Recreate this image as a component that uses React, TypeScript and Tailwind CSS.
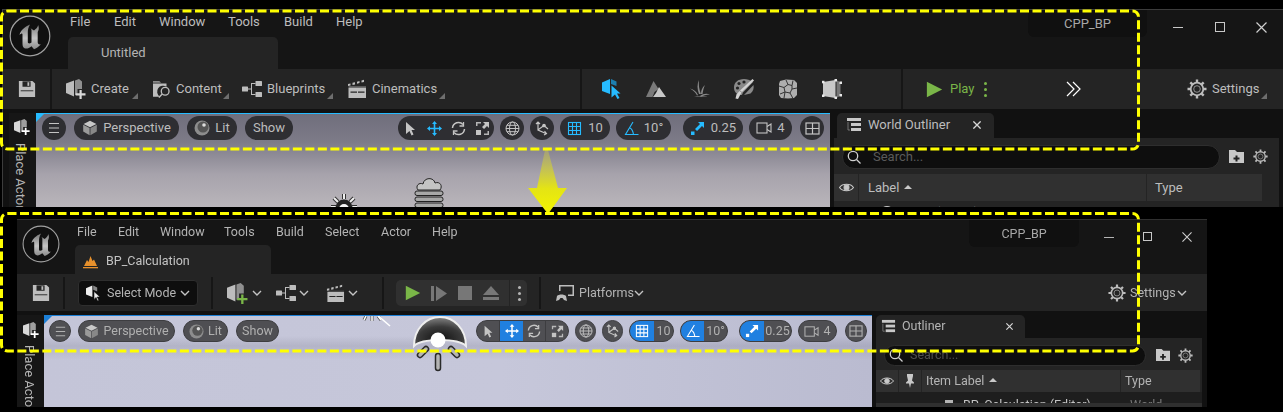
import React from "react";

type IP = { s?: number; c?: string; className?: string };
const Svg = ({ s = 20, c = "#bdbdbd", className = "", children }: IP & { children: React.ReactNode }) => (
  <svg width={s} height={s} viewBox="0 0 20 20" fill={c} stroke="none" className={`shrink-0 ${className}`}>
    {children}
  </svg>
);

const Logo = ({ s = 42, id }: { s?: number; id: string }) => (
  <svg width={s} height={s} viewBox="0 0 42 42" className="shrink-0">
    <defs>
      <linearGradient id={id} x1="0" y1="10" x2="0" y2="34" gradientUnits="userSpaceOnUse">
        <stop offset="0" stopColor="#7c7c7c" />
        <stop offset=".55" stopColor="#c4c4c4" />
        <stop offset="1" stopColor="#8c8c8c" />
      </linearGradient>
    </defs>
    <circle cx="21" cy="21" r="19.800" fill="#101010" stroke="#a0a0a0" strokeWidth="1.200" />
    <path
      d="M10.500 20C11.500 15.500 15.500 12 21 9.500C19.200 12.500 18.800 15 18.800 18V27C18.800 28.800 20.800 28.800 22.500 27.500V15.500C22.500 14.500 22 13.500 21.200 13L25 15.500C27 14 28.500 12.500 29.200 10C30.300 13 29.800 15 28.700 17V27C28.700 29 29.800 30 32 29.300C29.500 32 27.200 33.500 25 34.200L22.500 31.300C20 33.200 17.500 34.200 15.500 33.200C14 32.300 13.500 31 13.500 28.500V19.500C13.500 18 12.200 18.500 10.500 20Z"
      fill={`url(#${id})`}
    />
  </svg>
);

const Save = ({ s = 20, c = "#bdbdbd" }: IP) => (
  <Svg s={s} c={c}>
    <path d="M1 1h15l3 3v15H1z" />
    <rect x="5" y="1.500" width="9" height="6" fill="#242424" />
    <rect x="10.500" y="2.500" width="2" height="4" fill={c} />
    <rect x="3" y="11.500" width="14" height="1" fill="#242424" />
  </Svg>
);
const Cube = ({ s = 22, c = "#bdbdbd", plus = "#d9d9d9" }: IP & { plus?: string }) => (
  <Svg s={s} c={c}>
    <path d="M0 4.500 8 1.500 8 17.500 0 14z" />
    <path d="M9 1.500 13 0l3 2.500V10H11.500v6H9z" opacity=".7" />
    <path d="M13.500 11h2.200v3.200H19.500v2.200h-3.800V20h-2.200v-3.600H9.700v-2.200h3.800z" fill={plus} />
  </Svg>
);
const Folder = ({ s = 20, c = "#bdbdbd" }: IP) => (
  <Svg s={s}>
    <path d="M0 1h7l2 2H0z" fill="#8a8a8a" />
    <path d="M0 4h15v3.500a6.500 6.500 0 0 0-7.500 11H0z" fill={c} />
    <circle cx="13.500" cy="12.500" r="4.300" fill="none" stroke={c} strokeWidth="1.500" />
    <path d="M10.300 15.500 6.500 19.500" stroke={c} strokeWidth="1.600" />
  </Svg>
);
const Blueprint = ({ s = 20, c = "#bdbdbd" }: IP) => (
  <Svg s={s} c={c}>
    <rect x="0" y="7.500" width="6" height="5" rx=".6" />
    <rect x="13.500" y="2" width="6.500" height="5" rx=".6" />
    <rect x="13.500" y="13" width="6.500" height="5" rx=".6" />
    <path d="M6 9.500h3V4h4.500v1H10v10h3.500v1H9v-5.500H6z" />
  </Svg>
);
const Clapper = ({ s = 20, c = "#bdbdbd" }: IP) => (
  <Svg s={s} c={c}>
    <path d="M1.500 8.500h17.500v10.500H1.500zM3.500 12.500v1.200h6.500v-1.200zM11 12.500v1.200h6.500v-1.200z" fillRule="evenodd" />
    <path d="M1 7 1 5 3.500 4.500 3.500 6.500zM5.500 6 5.500 3.800 8 3.200 8 5.400zM10 4.800 10 2.700 12.500 2 12.500 4.100zM14.500 3.600 14.500 1.500 17 .8 17 3z" />
    <rect x="1.500" y="7.200" width="17.500" height=".6" opacity=".6" />
  </Svg>
);
const Gear = ({ s = 20, c = "#bdbdbd" }: IP) => (
  <Svg s={s} c={c}>
    <g stroke={c} strokeWidth="2.400">
      <path d="M10 0.500v3M10 16.500v3M0.500 10h3M16.500 10h3M3.300 3.300l2.100 2.100M14.600 14.600l2.100 2.100M3.300 16.700l2.100-2.100M14.600 5.400l2.100-2.100" />
    </g>
    <circle cx="10" cy="10" r="6.300" fill="none" stroke={c} strokeWidth="1.800" />
    <circle cx="10" cy="10" r="3.300" fill="none" stroke={c} strokeWidth="1" opacity=".7" />
  </Svg>
);
const Chev = ({ s = 10, c = "#c4c4c4" }: IP) => (
  <svg width={s} height={s} viewBox="0 0 10 10" className="shrink-0" fill="none" stroke={c} strokeWidth="1.400">
    <path d="M1 3l4 4 4-4" />
  </svg>
);
const Corner = () => <span className="self-end mb-[10px] ml-[3px] w-0 h-0 border-l-[6px] border-l-transparent border-b-[6px] border-b-[#6e6e6e]" />;

const Play = ({ s = 18, c = "#7ab648" }: IP) => (
  <Svg s={s} c={c}>
    <path d="M1 1l18 9-18 9z" />
  </Svg>
);
const Mountains = ({ s = 20 }: IP) => (
  <Svg s={s}>
    <path d="M0 18 7.500 2l5 8-4 3-2 5z" fill="#7a7a7a" />
    <path d="M7 18l3-4 3-6 7 10z" fill="#c8c8c8" />
  </Svg>
);
const Grass = ({ s = 20 }: IP) => (
  <Svg s={s}>
    <path d="M9 15C7 10 7 5 9 1c-.5 5 0 9 2 14zM11 15c0-4 1-6 4-9-1.500 3-2 6-2.500 9zM8 16C6 12 3 10 0 9.500 4 12 6 14 7 16.500zM10 17c3-2 6-3 10-1.500-4 0-7 1-9 2.500zM4 18c4-1.500 9-1.500 14 0-5-.5-9-.5-14 0z" fill="#8a8a8a" />
  </Svg>
);
const Palette = ({ s = 20 }: IP) => (
  <Svg s={s}>
    <path d="M10 0C4 0 0 3.500 0 8.500s4 8 7.500 7.500c1-.2 1-1.500 1.500-2.500L19 3C16 1 13 0 10 0z" fill="#8a8a8a" />
    <circle cx="3.500" cy="9" r="1.600" fill="#242424" />
    <circle cx="5" cy="4.500" r="1.600" fill="#242424" />
    <circle cx="10" cy="3" r="1.600" fill="#242424" />
    <path d="M20 1.500 8 13l-2-1.500L18.500 0z" fill="#d4d4d4" />
    <path d="M7.500 13.500 4 20l-2.500-.5 1-4 3-3.500z" fill="#d4d4d4" />
    <path d="M19.500 6c.5 3 0 6-3 8.500L10 16z" fill="#8a8a8a" />
  </Svg>
);
const Rocks = ({ s = 20 }: IP) => (
  <Svg s={s}>
    <path d="M2 2 8 .5 16 1l3 3v12l-3 3-6 .5L3 19l-2-3V5z" fill="#aeaeae" />
    <path d="M1 7l5 1.500 4-3 4 1 1-5M6 8.500 7 13 2 15M7 13l5 1 3 5.500M12 14l2-4 5-1M10 5.500 8 1M14 6.500l0 3.500M7 13l-1 6" fill="none" stroke="#343434" strokeWidth="1" />
  </Svg>
);
const Geometry = ({ s = 20 }: IP) => (
  <Svg s={s}>
    <path d="M1 3 13.500 1v18L1 17z" fill="#c8c8c8" />
    <path d="M14.500 1l4 2.500v13l-4 2.500z" fill="#777" />
    <g fill="#e8e8e8">
      <rect x="0" y="1.800" width="2.500" height="2.500" />
      <rect x="12.500" y="0" width="2.500" height="2.500" />
      <rect x="17.500" y="2.500" width="2.500" height="2.500" />
      <rect x="0" y="15.500" width="2.500" height="2.500" />
      <rect x="12.500" y="17.500" width="2.500" height="2.500" />
      <rect x="17.500" y="15" width="2.500" height="2.500" />
    </g>
  </Svg>
);
const SelectBlue = ({ s = 20 }: IP) => (
  <Svg s={s}>
    <path d="M0 3.500 8 0v15L0 12z" fill="#26bbff" />
    <path d="M9 0l5.500 2.500V7L9 5z" fill="#1d7fb0" />
    <path d="M9.500 6.500l9 8h-3.500l2.500 4.500-2 1-2.500-4.500-3.500 3z" fill="#26bbff" />
  </Svg>
);
const SelectWhite = ({ s = 16 }: IP) => (
  <Svg s={s}>
    <path d="M0 4l8-3.500v14.500L0 12z" fill="#eee" />
    <path d="M9 .5l5 2.500V8l-5-2z" fill="#888" />
    <path d="M10 8l7.500 7H14l2 4-1.500 1-2-4.500-2.500 2.500z" fill="#eee" stroke="#111" strokeWidth=".7" />
  </Svg>
);
const DoubleChev = () => (
  <svg width="16" height="16" viewBox="0 0 16 16" fill="none" stroke="#fff" strokeWidth="1.200">
    <path d="M1 1l7 7-7 7M7 1l7 7-7 7" />
  </svg>
);
const Hamburger = ({ s = 14, c = "#c4c4c4" }: IP) => (
  <svg width={s} height={s} viewBox="0 0 14 14" fill="none" stroke={c} strokeWidth="1.100">
    <path d="M2 2.500h10M2 7h10M2 11.500h10" />
  </svg>
);
const Persp = ({ s = 18 }: IP) => (
  <Svg s={s}>
    <path d="M10 1l8 4-8 4-8-4z" fill="#c8c8c8" />
    <path d="M1.500 6l8 4v9l-8-4.500z" fill="#9a9a9a" />
    <path d="M18.500 6l-8 4v9l8-4.500z" fill="#888" />
  </Svg>
);
const Ball = ({ s = 16 }: IP) => (
  <svg width={s} height={s} viewBox="0 0 16 16">
    <circle cx="8" cy="8" r="7.500" fill="#8d8d8d" />
    <circle cx="9" cy="7" r="5.500" fill="#555" />
    <circle cx="10" cy="5" r="1.800" fill="#ddd" />
  </svg>
);
const Cursor = ({ s = 15, c = "#c4c4c4" }: IP) => (
  <svg width={s} height={s} viewBox="0 0 15 15" fill={c}>
    <path d="M3 1l9 8H8.500l2 4.500-2 1-2-4.500L3 13z" />
  </svg>
);
const Move = ({ s = 15, c = "#26bbff" }: IP) => (
  <svg width={s} height={s} viewBox="0 0 15 15" fill={c}>
    <path d="M7.500 0 10 3H8.300v3.700H12V5l3 2.500L12 10V8.300H8.300V12H10l-2.500 3L5 12h1.700V8.300H3V10L0 7.500 3 5v1.700h3.700V3H5z" />
  </svg>
);
const Rotate = ({ s = 15, c = "#c4c4c4" }: IP) => (
  <svg width={s} height={s} viewBox="0 0 15 15" fill="none" stroke={c} strokeWidth="1.500">
    <path d="M1.500 7A6 6 0 0 1 12 3.500M13.500 8A6 6 0 0 1 3 11.500" />
    <path d="M12.500 1v4h-4M2.500 14v-4h4" strokeWidth="1.300" />
  </svg>
);
const Scale = ({ s = 15, c = "#c4c4c4" }: IP) => (
  <svg width={s} height={s} viewBox="0 0 15 15" fill={c}>
    <path d="M1 1h5v1.500H2.500V5H1zM14 14H9v-1.500h3.500V10H14z" opacity=".9" />
    <path d="M8 1h6v6l-2-2-3 3-2-2 3-3z" />
    <rect x="1" y="9" width="5" height="5" />
  </svg>
);
const Globe = ({ s = 15, c = "#c4c4c4" }: IP) => (
  <svg width={s} height={s} viewBox="0 0 15 15" fill="none" stroke={c} strokeWidth="1">
    <circle cx="7.500" cy="7.500" r="6.500" />
    <ellipse cx="7.500" cy="7.500" rx="3" ry="6.500" />
    <path d="M1 7.500h13M2 4.300h11M2 10.700h11" />
  </svg>
);
const Surface = ({ s = 15, c = "#c4c4c4" }: IP) => (
  <svg width={s} height={s} viewBox="0 0 15 15" fill="none" stroke={c} strokeWidth="1.200">
    <path d="M3 1v8l8 3.500M1 3l2-2 2 2M9 14l2.500-1.500L9.500 10M3.500 8.500 9 4.500l4 3.500" />
    <circle cx="9" cy="4.500" r="1.200" fill={c} />
  </svg>
);
const GridI = ({ s = 15, c = "#26bbff" }: IP) => (
  <svg width={s} height={s} viewBox="0 0 15 15" fill="none" stroke={c} strokeWidth="1.100">
    <rect x="1.500" y="1.500" width="12" height="12" />
    <path d="M5.500 1.500v12M9.500 1.500v12M1.500 5.500h12M1.500 9.500h12" />
  </svg>
);
const Angle = ({ s = 15, c = "#26bbff" }: IP) => (
  <svg width={s} height={s} viewBox="0 0 15 15" fill="none" stroke={c} strokeWidth="1.100">
    <path d="M9 1 1.500 13.500H14.500M6 7c2 1 3 3 3.500 6.500" />
  </svg>
);
const ScaleSnap = ({ s = 15, c = "#26bbff" }: IP) => (
  <svg width={s} height={s} viewBox="0 0 15 15" fill={c}>
    <path d="M8 1h6v6l-2-2-5 5-2-2 5-5z" />
    <rect x="1" y="10.500" width="3.500" height="3.500" />
  </svg>
);
const Camera = ({ s = 16, c = "#c4c4c4" }: IP) => (
  <svg width={s} height={s} viewBox="0 0 16 16" fill="none" stroke={c} strokeWidth="1.100">
    <rect x="1" y="3" width="10" height="10" />
    <path d="M11 6.500 15 4v8l-4-2.500" />
  </svg>
);
const Layout = ({ s = 15, c = "#c4c4c4" }: IP) => (
  <svg width={s} height={s} viewBox="0 0 15 15" fill="none" stroke={c} strokeWidth="1.200">
    <rect x="1" y="2" width="13" height="11" />
    <path d="M7.500 2v11M1 7.500h13" />
  </svg>
);
const OutlinerI = ({ s = 16 }: IP) => (
  <svg width={s} height={s} viewBox="0 0 16 16" fill="#c8c8c8">
    <rect x="1" y="1" width="14" height="3" />
    <rect x="5" y="6" width="10" height="3" />
    <rect x="5" y="11" width="10" height="3" />
    <path d="M2 5v8h2" fill="none" stroke="#888" strokeWidth=".8" />
  </svg>
);
const Search = ({ s = 14 }: IP) => (
  <svg width={s} height={s} viewBox="0 0 14 14" fill="none" stroke="#d0d0d0" strokeWidth="1.300">
    <circle cx="6" cy="6" r="4.700" />
    <path d="M9.500 9.500 13.500 13.500" />
  </svg>
);
const FolderPlus = ({ s = 15 }: IP) => (
  <svg width={s} height={s} viewBox="0 0 15 15" fill="#c8c8c8">
    <path d="M0 1h6l2 2h7v11H0z" />
    <path d="M6.500 6.500h2v2h2v2h-2v2h-2v-2h-2v-2h2z" fill="#222" />
  </svg>
);
const Eye = ({ s = 14 }: IP) => (
  <svg width={s} height={s} viewBox="0 0 14 14" fill="none" stroke="#c8c8c8" strokeWidth="1">
    <path d="M.5 7C3 3 11 3 13.500 7 11 11 3 11 .5 7z" />
    <circle cx="7" cy="7" r="2.300" fill="#c8c8c8" />
  </svg>
);
const Pin = ({ s = 14 }: IP) => (
  <svg width={s} height={s} viewBox="0 0 14 14" fill="#c8c8c8">
    <path d="M4 0h6v2L9 6.500l2 2v1H8L7 14 6 9.500H3v-1l2-2L4 2z" />
  </svg>
);
const X = ({ s = 11, c = "#c8c8c8", w = 1.2 }: IP & { w?: number }) => (
  <svg width={s} height={s} viewBox="0 0 11 11" fill="none" stroke={c} strokeWidth={w}>
    <path d="M.5.5l10 10M10.500.5l-10 10" />
  </svg>
);
const Dots = ({ c = "#7ab648" }: { c?: string }) => (
  <span className="flex flex-col gap-[3px]">
    <span className="w-[3px] h-[3px] rounded-full" style={{ background: c }} />
    <span className="w-[3px] h-[3px] rounded-full" style={{ background: c }} />
    <span className="w-[3px] h-[3px] rounded-full" style={{ background: c }} />
  </span>
);
const BpTab = ({ s = 15 }: IP) => (
  <svg width={s} height={s} viewBox="0 0 15 15">
    <path d="M1 12 4 6l1.500 2L7.500 2l2 5 1.500-1.500L14 12z" fill="#e8912c" />
    <rect x="0" y="13" width="15" height="1.300" fill="#e8912c" />
  </svg>
);

const Pill = ({ className = "", children }: { className?: string; children: React.ReactNode }) => (
  <div className={`flex items-center justify-center rounded-full overflow-hidden shrink-0 ${className}`}>{children}</div>
);

const VSep = ({ className = "" }: { className?: string }) => <div className={`w-[2px] self-stretch bg-[#161616] shrink-0 ${className}`} />;

function WindowTop() {
  const menu: [string, string][] = [
    ["File", "w-[44px]"],
    ["Edit", "w-[45px]"],
    ["Window", "w-[69px]"],
    ["Tools", "w-[56px]"],
    ["Build", "w-[52px]"],
    ["Help", "w-[40px]"],
  ];
  const P = "h-[24px] bg-[#2e2e32] text-[#bdbdbd] text-[13px]";
  return (
    <div className="ml-[2px] w-[1281px] h-[198px] flex flex-col bg-[#151515] border-t border-l border-[#3c3c3c] overflow-hidden text-[13px] text-[#bdbdbd]">
      <div className="h-[59px] flex shrink-0">
        <div className="w-[65px] pl-[6px] pt-[5px] shrink-0">
          <Logo id="lg1" />
        </div>
        <div className="flex flex-col w-[960px] shrink-0">
          <div className="h-[27px] flex items-center pl-[2px] pb-[3px]">
            {menu.map(([m, w]) => (
              <span key={m} className={`${w} shrink-0`}>
                {m}
              </span>
            ))}
          </div>
          <div className="w-[210px] h-[32px] bg-[#242424] rounded-t-[5px] flex items-center pl-[33px] text-[#b4b4b4]">Untitled</div>
        </div>
        <div className="w-[119px] h-[27px] bg-[#101010] rounded-b-[6px] flex items-center justify-center shrink-0 text-[#a8a8a8]">CPP_BP</div>
        <div className="flex-1 h-[27px] pl-[26px] pt-[12px] flex items-start">
          <span className="w-[10px] h-[1px] bg-[#c8c8c8] mt-[5px]" />
          <span className="ml-[32px] w-[10px] h-[10px] border border-[#c8c8c8]" />
          <span className="ml-[31px]">
            <X c="#cfcfcf" />
          </span>
        </div>
      </div>
      <div className="h-[40px] bg-[#242424] flex items-center shrink-0">
        <div className="w-[47px] flex justify-center">
          <Save s={18} />
        </div>
        <VSep />
        <div className="w-[528px] flex items-center pl-[14px] shrink-0 h-full">
          <Cube s={20} />
          <span className="ml-[5px] w-[38px]">Create</span>
          <Corner />
          <span className="ml-[15px]">
            <Folder s={18} />
          </span>
          <span className="ml-[5px] w-[44px]">Content</span>
          <Corner />
          <span className="ml-[13px]">
            <Blueprint s={20} />
          </span>
          <span className="ml-[5px] w-[57px]">Blueprints</span>
          <Corner />
          <span className="ml-[14px]">
            <Clapper s={20} />
          </span>
          <span className="ml-[5px] w-[64px]">Cinematics</span>
          <Corner />
        </div>
        <VSep />
        <div className="w-[319px] flex items-center pl-[20px] gap-[24px] shrink-0 h-full">
          <SelectBlue />
          <Mountains />
          <Grass />
          <Palette />
          <Rocks />
          <Geometry />
        </div>
        <VSep />
        <div className="w-[163px] pl-[23px] flex items-center shrink-0">
          <Play s={17} />
          <span className="ml-[7px] text-[#7ab648] w-[30px]">Play</span>
          <span className="ml-[4px]">
            <Dots />
          </span>
        </div>
        <DoubleChev />
        <span className="ml-[105px]">
          <Gear s={20} />
        </span>
        <span className="ml-[5px] w-[46px]">Settings</span>
        <Corner />
      </div>
      <div className="flex-1 flex bg-[#111111] pt-[4px] min-h-0">
        <div className="w-[6px] shrink-0" />
        <div className="w-[27px] shrink-0 bg-[#161616] flex flex-col items-center">
          <div className="mt-[6px] ml-[-1px]">
            <Cube s={16} c="#d8d8d8" plus="#ffffff" />
          </div>
          <div className="mt-[8px] ml-[-4px] text-[13px] text-[#b4b4b4] [writing-mode:vertical-rl] whitespace-nowrap">Place Actors</div>
        </div>
        <div className="relative w-[794px] shrink-0 border-t border-[#26bbff] bg-[linear-gradient(to_bottom,#6f6e7c_0%,#7d7b88_30%,#a7a3ac_65%,#b9b5ba_100%)] overflow-hidden pt-[2px] pl-[6px]">
          <span className="absolute left-0 top-0 w-0 h-0 border-t-[8px] border-t-[#26bbff] border-r-[8px] border-r-transparent" />
          <div className="flex items-center">
            <Pill className={`${P} w-[24px]`}>
              <Hamburger />
            </Pill>
            <Pill className={`${P} w-[105px] ml-[8px] gap-[5px]`}>
              <Persp s={16} />
              <span>Perspective</span>
            </Pill>
            <Pill className={`${P} w-[50px] ml-[8px] gap-[5px]`}>
              <Ball />
              <span>Lit</span>
            </Pill>
            <Pill className={`${P} w-[48px] ml-[8px]`}>Show</Pill>
            <Pill className={`${P} w-[96px] ml-[105px] gap-[9px]`}>
              <Cursor />
              <Move />
              <Rotate />
              <Scale />
            </Pill>
            <Pill className={`${P} w-[24px] ml-[6px]`}>
              <Globe />
            </Pill>
            <Pill className={`${P} w-[24px] ml-[6px]`}>
              <Surface />
            </Pill>
            <Pill className={`${P} w-[50px] ml-[6px] gap-[6px]`}>
              <GridI />
              <span>10</span>
            </Pill>
            <Pill className={`${P} w-[55px] ml-[6px] gap-[5px]`}>
              <Angle />
              <span>10°</span>
            </Pill>
            <Pill className={`${P} w-[60px] ml-[12px] gap-[6px]`}>
              <ScaleSnap />
              <span>0.25</span>
            </Pill>
            <Pill className={`${P} w-[43px] ml-[6px] gap-[5px]`}>
              <Camera />
              <span>4</span>
            </Pill>
            <Pill className={`${P} w-[24px] ml-[8px]`}>
              <Layout />
            </Pill>
          </div>
          {/* sun actor */}
          <div className="absolute left-[295px] top-[79px] w-[26px] h-[26px]">
            <svg width="26" height="26" viewBox="0 0 26 26" fill="none">
              <g stroke="#333" strokeWidth="4">
                <path d="M13 1v5M3 5l4 4M23 5l-4 4M0 14h5M26 14h-5" />
              </g>
              <g stroke="#f0f0f0" strokeWidth="2">
                <path d="M13 1v5M3 5l4 4M23 5l-4 4M0 14h5M26 14h-5" />
              </g>
              <circle cx="13" cy="15" r="8.500" fill="#222" />
              <circle cx="13" cy="16" r="5" fill="#f5f5f5" />
            </svg>
          </div>
          {/* sky light actor */}
          <div className="absolute left-[378px] top-[61px] w-[30px] h-[36px]">
            <svg width="30" height="36" viewBox="0 0 30 36" fill="#a8a8a8" stroke="#222" strokeWidth="1">
              <path d="M4 15c-3-4 1-8 5-6 1-7 11-7 12-1 5-2 8 3 5 7z" fill="#c4c4c4" />
              <rect x="1" y="16" width="28" height="4.500" rx="2" />
              <rect x="1" y="22" width="28" height="4.500" rx="2" />
              <rect x="1" y="28" width="28" height="4.500" rx="2" />
            </svg>
          </div>
        </div>
        <div className="w-[4px] shrink-0" />
        <div className="flex-1 flex flex-col min-w-0 bg-[#111111]">
          <div className="h-[25px] shrink-0 pl-[3px]">
            <div className="w-[157px] h-full bg-[#242424] rounded-t-[5px] flex items-center pl-[9px] pb-[2px]">
              <OutlinerI />
              <span className="ml-[6px]">World Outliner</span>
              <span className="ml-[23px]">
                <X s={8} c="#d8d8d8" w={1.8} />
              </span>
            </div>
          </div>
          <div className="flex-1 bg-[#242424] mr-[4px] overflow-hidden">
            <div className="h-[36px] flex items-center pl-[8px] pt-[1px]">
              <div className="w-[378px] h-[24px] bg-[#0e0e0e] border border-[#2e2e2e] rounded-full flex items-center pl-[4px] text-[#5a5a5a]">
                <Search />
                <span className="ml-[12px]">Search...</span>
              </div>
              <span className="ml-[9px]">
                <FolderPlus />
              </span>
              <span className="ml-[9px]">
                <Gear s={15} />
              </span>
            </div>
            <div className="h-[27px] flex gap-[1px]">
              <div className="w-[24px] bg-[#303030] flex items-center justify-center">
                <Eye s={15} />
              </div>
              <div className="w-[287px] bg-[#303030] flex items-center pl-[9px] gap-[5px]">
                Label
                <span className="w-0 h-0 mb-[2px] border-x-[4px] border-x-transparent border-b-[4px] border-b-[#c8c8c8]" />
              </div>
              <div className="w-[115px] bg-[#303030] flex items-center pl-[8px]">Type</div>
            </div>
            <div className="h-[8px] flex pl-[46px] leading-[24px] overflow-hidden">
              <span className="mt-[5px] w-[14px] h-[14px] rounded-full bg-[#c8c8c8] shrink-0" />
              <span className="ml-[5px] text-[#bdbdbd]">World (Editor)</span>
            </div>
          </div>
        </div>
      </div>
    </div>
  );
}

function WindowBottom() {
  const menu: [string, string][] = [
    ["File", "w-[41px]"],
    ["Edit", "w-[42px]"],
    ["Window", "w-[64px]"],
    ["Tools", "w-[52px]"],
    ["Build", "w-[49px]"],
    ["Select", "w-[56px]"],
    ["Actor", "w-[51px]"],
    ["Help", "w-[40px]"],
  ];
  const P = "h-[22px] bg-[#4f4f53] border border-[#3d3d40] text-[#b0b0b0] text-[12.5px]";
  const blue = "h-full bg-[#2080e0] flex items-center justify-center shrink-0";
  const seg = "h-full flex items-center justify-center flex-1";
  return (
    <div className="mt-[12px] ml-[17px] w-[1190px] h-[188px] flex flex-col bg-[#151515] border-t border-[#303030] overflow-hidden text-[12.5px] text-[#b4b4b4] blur-[0.4px]">
      <div className="h-[54px] flex shrink-0">
        <div className="w-[58px] pl-[5px] pt-[5px] shrink-0">
          <Logo s={38} id="lg2" />
        </div>
        <div className="flex flex-col w-[894px] shrink-0">
          <div className="h-[25px] flex items-center pl-[2px] pb-[1px]">
            {menu.map(([m, w]) => (
              <span key={m} className={`${w} shrink-0`}>
                {m}
              </span>
            ))}
          </div>
          <div className="w-[196px] h-[29px] bg-[#242424] rounded-t-[5px] flex items-center pl-[8px] pt-[3px] text-[#c4c4c4]">
            <BpTab />
            <span className="ml-[8px]">BP_Calculation</span>
          </div>
        </div>
        <div className="w-[110px] h-[27px] bg-[#101010] rounded-b-[6px] flex items-center justify-center pt-[2px] shrink-0 text-[#a8a8a8]">CPP_BP</div>
        <div className="flex-1 h-[27px] pl-[25px] pt-[12px] flex items-start">
          <span className="w-[10px] h-[1px] bg-[#b4b4b4] mt-[5px]" />
          <span className="ml-[29px] w-[9px] h-[9px] border border-[#c8c8c8]" />
          <span className="ml-[30px]">
            <X s={10} c="#cfcfcf" />
          </span>
        </div>
      </div>
      <div className="h-[37px] bg-[#242424] flex items-center shrink-0 pt-[1px]">
        <div className="w-[46px] flex justify-center pl-[1px]">
          <Save s={18} />
        </div>
        <VSep className="my-[2px]" />
        <div className="w-[146px] flex items-center pl-[13px] shrink-0">
          <div className="w-[120px] h-[26px] bg-[#0e0e0e] border border-[#2e2e2e] rounded-[4px] flex items-center pl-[7px]">
            <SelectWhite />
            <span className="ml-[5px] w-[73px]">Select Mode</span>
            <Chev />
          </div>
        </div>
        <VSep className="my-[2px]" />
        <div className="w-[169px] flex items-center pl-[14px] shrink-0">
          <Cube s={21} plus="#7ab648" />
          <span className="ml-[4px]">
            <Chev />
          </span>
          <span className="ml-[14px]">
            <Blueprint s={20} />
          </span>
          <span className="ml-[3px]">
            <Chev />
          </span>
          <span className="ml-[17px]">
            <Clapper s={19} />
          </span>
          <span className="ml-[3px]">
            <Chev />
          </span>
        </div>
        <VSep className="my-[2px]" />
        <div className="w-[155px] pl-[12px] shrink-0">
          <div className="w-[131px] h-[26px] bg-[#303030] rounded-[5px] flex items-center pl-[9px] overflow-hidden">
            <Play s={16} />
            <span className="ml-[10px]">
              <svg width="16" height="15" viewBox="0 0 16 15" fill="#777">
                <rect x="0" y="0" width="3" height="15" />
                <path d="M5 0l11 7.500L5 15z" />
              </svg>
            </span>
            <span className="ml-[11px] w-[14px] h-[14px] bg-[#777]" />
            <span className="ml-[11px]">
              <svg width="16" height="15" viewBox="0 0 16 15" fill="#777">
                <path d="M8 0l8 9H0z" />
                <rect x="0" y="11" width="16" height="3" />
              </svg>
            </span>
            <span className="ml-[10px] w-[1px] h-full bg-[#242424]" />
            <span className="ml-[8px]">
              <Dots c="#b4b4b4" />
            </span>
          </div>
        </div>
        <VSep className="my-[2px]" />
        <div className="flex items-center pl-[14px] shrink-0">
          <svg width="20" height="19" viewBox="0 0 20 19" fill="#bdbdbd">
            <path d="M4 1h15v11h-6v-1.500h4.500V2.500h-12V7H4z" />
            <path d="M1 17l1-5c2-2 7-2 9 0l1 5-3-1-1.500-2h-2L4 16z" />
          </svg>
          <span className="ml-[4px] w-[52px] whitespace-nowrap">Platforms</span>
          <span className="ml-[3px]">
            <Chev />
          </span>
        </div>
        <span className="ml-[464px]">
          <Gear s={18} />
        </span>
        <span className="ml-[4px] w-[45px]">Settings</span>
        <span className="ml-[2px]">
          <Chev />
        </span>
      </div>
      <div className="flex-1 flex bg-[#111111] pt-[4px] min-h-0">
        <div className="w-[27px] shrink-0 bg-[#161616] flex flex-col items-center">
          <div className="mt-[7px] ml-[1px]">
            <Cube s={16} c="#d8d8d8" plus="#ffffff" />
          </div>
          <div className="mt-[7px] ml-[-2px] text-[13px] text-[#b4b4b4] [writing-mode:vertical-rl] whitespace-nowrap">Place Actors</div>
        </div>
        <div className="relative w-[828px] shrink-0 border-t border-[#1c7fd6] bg-[linear-gradient(to_bottom,transparent_20px,rgba(70,70,90,.14)_30px,transparent_44px),linear-gradient(to_right,#c4c5d8_0%,#c6c7da_55%,#babbd0_100%)] overflow-hidden pt-[4px] pl-[5px]">
          <span className="absolute left-0 top-0 w-0 h-0 border-t-[8px] border-t-[#1c7fd6] border-r-[8px] border-r-transparent" />
          <div className="flex items-center">
            <Pill className={`${P} w-[22px]`}>
              <Hamburger s={13} c="#b0b0b0" />
            </Pill>
            <Pill className={`${P} w-[97px] ml-[7px] gap-[4px]`}>
              <Persp s={15} />
              <span>Perspective</span>
            </Pill>
            <Pill className={`${P} w-[45px] ml-[8px] gap-[4px]`}>
              <Ball s={15} />
              <span>Lit</span>
            </Pill>
            <Pill className={`${P} w-[43px] ml-[8px]`}>Show</Pill>
            <Pill className={`${P} w-[93px] ml-[197px]`}>
              <div className={`${seg} border-r border-[#3d3d40]`}>
                <Cursor s={13} />
              </div>
              <div className={`${blue} w-[23px]`}>
                <Move s={14} c="#ffffff" />
              </div>
              <div className={`${seg} border-r border-[#3d3d40]`}>
                <Rotate s={14} />
              </div>
              <div className={seg}>
                <Scale s={13} />
              </div>
            </Pill>
            <Pill className={`${P} w-[21px] ml-[6px]`}>
              <Globe s={14} />
            </Pill>
            <Pill className={`${P} w-[21px] ml-[6px]`}>
              <Surface s={14} />
            </Pill>
            <Pill className={`${P} w-[45px] ml-[6px]`}>
              <div className={`${blue} w-[24px]`}>
                <GridI s={14} c="#ffffff" />
              </div>
              <div className={seg}>10</div>
            </Pill>
            <Pill className={`${P} w-[48px] ml-[6px]`}>
              <div className={`${blue} w-[23px]`}>
                <Angle s={14} c="#ffffff" />
              </div>
              <div className={seg}>10°</div>
            </Pill>
            <Pill className={`${P} w-[53px] ml-[11px]`}>
              <div className={`${blue} w-[24px]`}>
                <ScaleSnap s={14} c="#ffffff" />
              </div>
              <div className={seg}>0.25</div>
            </Pill>
            <Pill className={`${P} w-[39px] ml-[6px] gap-[4px]`}>
              <Camera s={15} c="#b0b0b0" />
              <span>4</span>
            </Pill>
            <Pill className={`${P} w-[22px] ml-[8px]`}>
              <Layout s={14} c="#b0b0b0" />
            </Pill>
          </div>
          <div className="absolute left-[308px] top-[-6px] w-[40px] h-[20px]">
            <svg width="40" height="20" viewBox="0 0 40 20" fill="none" stroke="#fff" strokeWidth="1.500">
              <path d="M4 4l8 0M14 6l-2 4M20 6v5M26 6l3 4" stroke="#555" strokeWidth="3" />
              <path d="M24 4l14 12" />
              <path d="M4 4l8 0M14 6l-2 4M20 6v5M26 6l3 4" />
            </svg>
          </div>
          {/* directional light actor */}
          <div className="absolute left-[368px] top-[0px] w-[56px] h-[56px]">
            <svg width="56" height="56" viewBox="0 0 56 56">
              <defs>
                <radialGradient id="dome" cx=".5" cy=".75" r=".7">
                  <stop offset="0" stopColor="#111" />
                  <stop offset=".6" stopColor="#3a3a3a" />
                  <stop offset="1" stopColor="#7a7a7a" />
                </radialGradient>
              </defs>
              <path d="M2 30C2 13 14 1 28 1s26 12 26 29c-8-8-44-8-52 0z" fill="url(#dome)" stroke="#eeeeee" strokeWidth="2" />
              <circle cx="26" cy="24" r="7.500" fill="#ffffff" />
              <g stroke="#2a2a2a" strokeWidth="6.500" strokeLinecap="round">
                <path d="M26 40v12M14 33l-6 6M39 33l6 6" />
              </g>
              <g stroke="#b4b4b4" strokeWidth="3.500" strokeLinecap="round">
                <path d="M26 40v12M14 33l-6 6M39 33l6 6" />
              </g>
            </svg>
          </div>
        </div>
        <div className="w-[4px] shrink-0" />
        <div className="flex-1 flex flex-col min-w-0 bg-[#111111]">
          <div className="h-[23px] shrink-0">
            <div className="w-[149px] h-full bg-[#242424] rounded-t-[5px] flex items-center pl-[5px]">
              <OutlinerI s={15} />
              <span className="ml-[6px]">Outliner</span>
              <span className="ml-[61px]">
                <X s={7} c="#d8d8d8" w={1.8} />
              </span>
            </div>
          </div>
          <div className="flex-1 bg-[#242424] mr-[5px] overflow-hidden">
            <div className="h-[32px] flex items-center pl-[8px] pt-[2px]">
              <div className="w-[262px] h-[21px] bg-[#0e0e0e] border border-[#2e2e2e] rounded-full flex items-center pl-[4px] text-[#4e4e4e]">
                <Search />
                <span className="ml-[7px]">Search...</span>
              </div>
              <span className="ml-[10px]">
                <FolderPlus s={14} />
              </span>
              <span className="ml-[8px]">
                <Gear s={15} />
              </span>
            </div>
            <div className="h-[22px] flex gap-[1px]">
              <div className="w-[22px] bg-[#303030] flex items-center justify-center">
                <Eye />
              </div>
              <div className="w-[22px] bg-[#303030] flex items-center justify-center">
                <Pin />
              </div>
              <div className="w-[198px] bg-[#303030] flex items-center pl-[4px] gap-[5px]">
                Item Label
                <span className="w-0 h-0 mb-[2px] border-x-[4px] border-x-transparent border-b-[4px] border-b-[#c8c8c8]" />
              </div>
              <div className="w-[79px] bg-[#303030] flex items-center pl-[4px]">Type</div>
            </div>
            <div className="h-[11px] flex bg-[#1e1e1e] leading-[26px] overflow-hidden">
              <span className="ml-[54px] mt-[11px] w-[9px] h-[2px] bg-[#9a9a9a] shrink-0" />
              <span className="ml-[6px] mt-[8px] w-[8px] h-[8px] bg-[#b4b4b4] shrink-0" />
              <span className="ml-[10px] w-[167px] shrink-0 text-[#c4c4c4]">BP_Calculation (Editor)</span>
              <span className="text-[#777]">World</span>
            </div>
            <div className="h-[10px] bg-[#2f2f2f]" />
          </div>
        </div>
      </div>
    </div>
  );
}

export default function App() {
  return (
    <div className="relative w-[1283px] h-[412px] bg-black pt-[9px] overflow-hidden font-['Roboto',sans-serif]">
      <WindowTop />
      <WindowBottom />
      <svg className="absolute left-0 top-0 pointer-events-none" width="1283" height="412" viewBox="0 0 1283 412" fill="none">
        <defs>
          <linearGradient id="arr" x1="0" y1="150" x2="0" y2="214" gradientUnits="userSpaceOnUse">
            <stop offset="0" stopColor="#b5b06a" stopOpacity=".6" />
            <stop offset=".6" stopColor="#e4e414" />
            <stop offset="1" stopColor="#f4f400" />
          </linearGradient>
        </defs>
        <path d="M545 150h3l10 38h9l-19 26-20-26h9z" fill="url(#arr)" />
        <rect x="1.500" y="11" width="1137" height="138" rx="6" stroke="#ffff00" strokeWidth="3" strokeDasharray="9 3.500" />
        <rect x="1.500" y="213.500" width="1137" height="137.500" rx="6" stroke="#ffff00" strokeWidth="3" strokeDasharray="9 3.500" />
      </svg>
    </div>
  );
}
